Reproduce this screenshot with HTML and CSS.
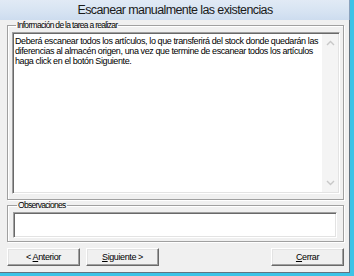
FILE: index.html
```html
<!DOCTYPE html>
<html lang="es">
<head>
    <meta charset="UTF-8">
    <title>Escanear manualmente las existencias</title>
    <link rel="stylesheet" href="styles.css">
</head>
<body>

    <div class="window">
        <div class="titlebar">Escanear manualmente las existencias</div>

        <div class="client">
            <fieldset class="group group-info">
                <legend>Información de la tarea a realizar</legend>
                <div class="memo">
                    <div class="memo-text">
                        Deberá escanear todos los artículos, lo que transferirá del stock donde quedarán las<br>
                        diferencias al almacén origen, una vez que termine de escanear todos los artículos<br>
                        haga click en el botón Siguiente.
                    </div>
                    <div class="memo-scroll">
                        <svg width="9" height="6" viewBox="0 0 9 6"><path d="M1 5 L4.5 1.5 L8 5" fill="none" stroke="#c8c8c8" stroke-width="1.4"/></svg>
                        <svg width="9" height="6" viewBox="0 0 9 6"><path d="M1 1 L4.5 4.5 L8 1" fill="none" stroke="#c8c8c8" stroke-width="1.4"/></svg>
                    </div>
                </div>
            </fieldset>

            <fieldset class="group group-obs">
                <legend>Observaciones</legend>
                <div class="edit"></div>
            </fieldset>

            <div class="buttons">
                <button class="btn">&lt; <u>A</u>nterior</button>
                <button class="btn"><u>S</u>iguiente &gt;</button>
                <span class="spacer"></span>
                <button class="btn"><u>C</u>errar</button>
            </div>
        </div>
    </div>

</body>
</html>
```

FILE: styles.css
```css
/* Page */
body {
    margin: 0;
    font-family: "Liberation Sans", Arial, sans-serif;
    background: #f0f0f0;
}

/* Window frame (right and bottom edge of the dialog) */
.window {
    width: 354px;
    height: 276px;
    box-sizing: border-box;
    display: flex;
    flex-direction: column;
    background: #f0f0f0;
    border-right: 4px solid #3cc3e6;
    border-bottom: 3px solid #3cc3e6;
    box-shadow: inset -1px -1px 0 #62727f;
}

/* Title bar */
.titlebar {
    height: 20px;
    line-height: 20px;
    text-align: center;
    font-size: 12.5px;
    letter-spacing: -0.6px;
    color: #1a1a1a;
    background: linear-gradient(#e1eaf5 0%, #d6e3f2 60%, #cddcef 100%);
    box-shadow: inset -1px 0 0 #8aa2bd;
}

/* Client area */
.client {
    flex: 1;
    padding: 0 6px 0 7px;
    font-size: 9px;
    letter-spacing: -0.4px;
    color: #000;
}

/* Group boxes (etched) */
.group {
    margin: 0;
    min-width: 0;
    border: 1px solid #a0a0a0;
    box-shadow: inset 1px 1px 0 #fff, 1px 1px 0 #fff;
}

.group legend {
    padding: 0 1px;
    margin-left: 4px;
    height: 10px;
    line-height: 10px;
    font-size: 8.5px;
    letter-spacing: -0.7px;
}

.group-info {
    padding: 2px 3px 5px 4px;
}

.group-obs {
    margin-top: 0;
    padding: 2px 6px 3px 5px;
}

/* Multi-line read-only memo */
.memo {
    height: 162px;
    box-sizing: border-box;
    display: flex;
    background: #fff;
    border-style: solid;
    border-width: 1px;
    border-color: #a0a0a0 #fff #fff #a0a0a0;
    box-shadow: inset 1px 1px 0 #696969, inset -1px -1px 0 #e3e3e3;
}

.memo-text {
    flex: 1;
    padding: 3px 0 0 2px;
    line-height: 10px;
    white-space: nowrap;
    overflow: hidden;
}

.memo-scroll {
    width: 16px;
    margin: 1px 1px 1px 0;
    background: #f4f4f4;
    display: flex;
    flex-direction: column;
    justify-content: space-between;
    align-items: center;
    padding: 6px 0;
}

/* Single-line edit */
.edit {
    height: 26px;
    box-sizing: border-box;
    background: #fff;
    border-style: solid;
    border-width: 1px;
    border-color: #a0a0a0 #fff #fff #a0a0a0;
    box-shadow: inset 1px 1px 0 #696969, inset -1px -1px 0 #e3e3e3;
}

/* Buttons */
.buttons {
    display: flex;
    gap: 6px;
    margin-top: 6px;
}

.spacer {
    flex: 1;
}

.btn {
    width: 73px;
    height: 18px;
    padding: 0;
    font-family: inherit;
    font-size: 9px;
    letter-spacing: -0.4px;
    color: #000;
    background: #f0f0f0;
    border-style: solid;
    border-width: 1px;
    border-color: #fff #696969 #696969 #fff;
    box-shadow: inset -1px -1px 0 #a0a0a0, inset 1px 1px 0 #e3e3e3;
}
```
